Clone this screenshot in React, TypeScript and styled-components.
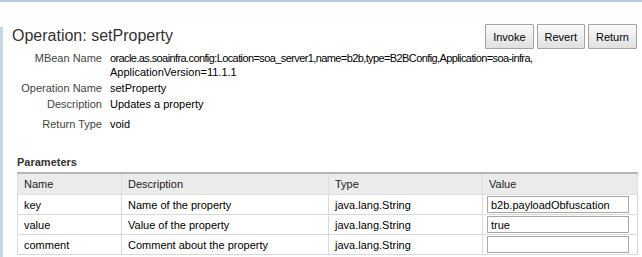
import React from "react";
import styled, { createGlobalStyle } from "styled-components";

const Global = createGlobalStyle`
  html, body { margin: 0; padding: 0; background: #fff; }
  body { font-family: "Liberation Sans", Arial, sans-serif; font-size: 11px; color: #000; }
`;

const Page = styled.div`
  width: 642px;
  height: 257px;
  overflow: hidden;
  border-top: 2px solid #b9cde0;
  box-sizing: border-box;
  display: flex;
  flex-direction: column;
`;

const Body = styled.div`
  flex: 1;
  display: flex;
  margin-top: 25px;
`;

const SideBar = styled.div`
  width: 3px;
  background: #c5d8ea;
  flex-shrink: 0;
`;

const Content = styled.div`
  flex: 1;
  min-width: 0;
  padding-left: 9px;
  display: flex;
  flex-direction: column;
`;

const Header = styled.div`
  display: flex;
  justify-content: space-between;
  align-items: flex-start;
`;

const Title = styled.h1`
  margin: 0;
  font-size: 16px;
  font-weight: normal;
  color: #333;
`;

const Buttons = styled.div`
  display: flex;
  gap: 3px;
  margin-top: -3px;
  padding-right: 5px;
`;

const Button = styled.button`
  height: 25px;
  padding: 0 7px;
  font-family: inherit;
  font-size: 11px;
  color: #000;
  border: 1px solid #a3a3a3;
  border-radius: 1px;
  background: linear-gradient(#fbfbfb, #e0e0e0);
`;

const Info = styled.div`
  display: grid;
  grid-template-columns: 90px 1fr;
  column-gap: 8px;
  margin-top: 2px;
`;

const Label = styled.div<{ $gap?: number }>`
  text-align: right;
  color: #444;
  line-height: 14px;
  margin-bottom: ${(p) => p.$gap ?? 2}px;
`;

const Value = styled.div<{ $gap?: number }>`
  line-height: 14px;
  color: #000;
  margin-bottom: ${(p) => p.$gap ?? 2}px;
`;

const Tight = styled.span`
  letter-spacing: -0.6px;
`;

const SectionTitle = styled.div`
  font-weight: bold;
  color: #333;
  margin-top: 23px;
  margin-left: 5px;
`;

const Table = styled.table`
  margin-left: 5px;
  margin-top: 4px;
  width: 620px;
  border-collapse: collapse;
  border-top: 2px solid #b5b5b5;
  table-layout: fixed;
`;

const Th = styled.th<{ $w: number }>`
  width: ${(p) => p.$w - 13}px;
  text-align: left;
  font-weight: normal;
  background: #ebebeb;
  height: 20px;
  padding: 0 6px;
  border: 1px solid #dedede;
  border-top: none;
  color: #222;
`;

const Td = styled.td`
  height: 19px;
  padding: 0 6px;
  border: 1px solid #d8d8d8;
  background: #fff;
`;

const Input = styled.input`
  width: 142px;
  height: 17px;
  box-sizing: border-box;
  border: 1px solid #a8a8a8;
  font-family: inherit;
  font-size: 11px;
  padding: 0 3px;
  margin: 0 0 0 -2px;
  display: block;
`;

const params = [
  { name: "key", desc: "Name of the property", type: "java.lang.String", value: "b2b.payloadObfuscation" },
  { name: "value", desc: "Value of the property", type: "java.lang.String", value: "true" },
  { name: "comment", desc: "Comment about the property", type: "java.lang.String", value: "" },
];

export default function App() {
  return (
    <>
      <Global />
      <Page>
        <Body>
          <SideBar />
          <Content>
            <Header>
              <Title>Operation: setProperty</Title>
              <Buttons>
                <Button>Invoke</Button>
                <Button>Revert</Button>
                <Button>Return</Button>
              </Buttons>
            </Header>
            <Info>
              <Label>MBean Name</Label>
              <Value>
                <Tight>oracle.as.soainfra.config:Location=soa_server1,name=b2b,type=B2BConfig,Application=soa-infra,</Tight>
                <br />
                ApplicationVersion=11.1.1
              </Value>
              <Label>Operation Name</Label>
              <Value>setProperty</Value>
              <Label $gap={6}>Description</Label>
              <Value $gap={6}>Updates a property</Value>
              <Label>Return Type</Label>
              <Value>void</Value>
            </Info>
            <SectionTitle>Parameters</SectionTitle>
            <Table>
              <thead>
                <tr>
                  <Th $w={104}>Name</Th>
                  <Th $w={207}>Description</Th>
                  <Th $w={154}>Type</Th>
                  <Th $w={155}>Value</Th>
                </tr>
              </thead>
              <tbody>
                {params.map((p) => (
                  <tr key={p.name}>
                    <Td>{p.name}</Td>
                    <Td>{p.desc}</Td>
                    <Td>{p.type}</Td>
                    <Td>
                      <Input defaultValue={p.value} />
                    </Td>
                  </tr>
                ))}
              </tbody>
            </Table>
          </Content>
        </Body>
      </Page>
    </>
  );
}
